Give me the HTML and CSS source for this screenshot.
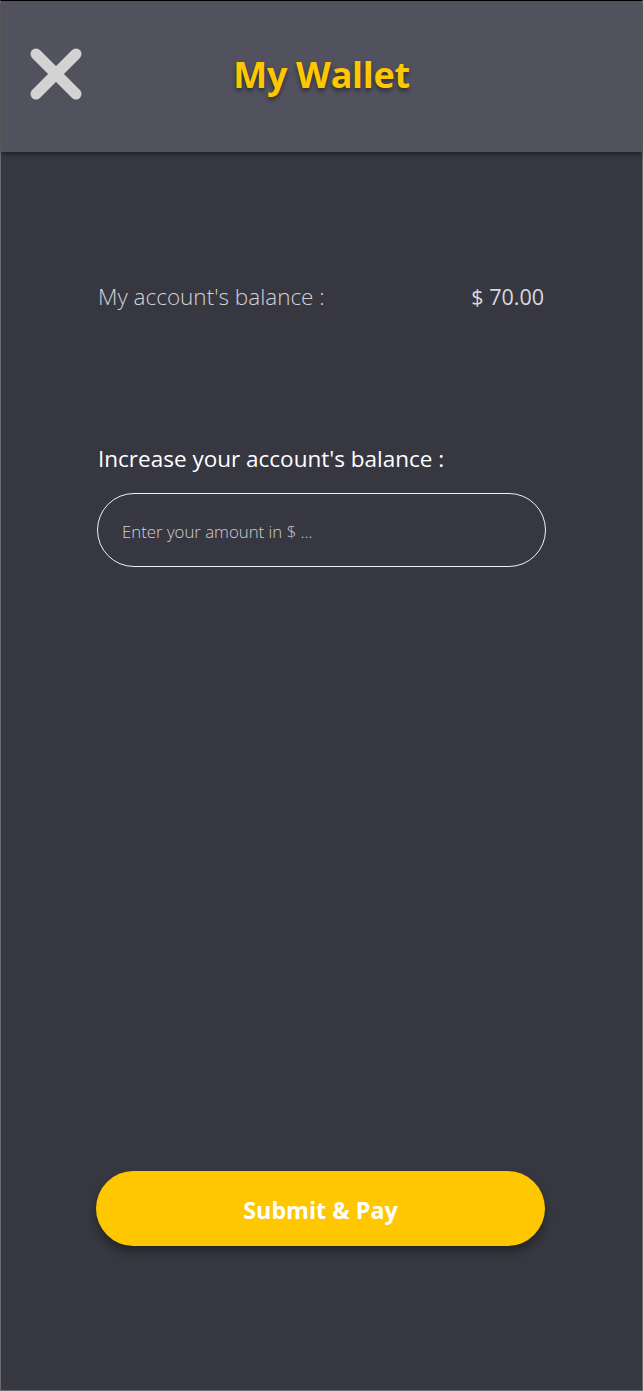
FILE: index.html
```html
<!DOCTYPE html>
<html>
<head>
<meta charset="utf-8">
<link rel="stylesheet" href="styles.css">
</head>
<body>
<div class="frame">
  <header class="topbar">
    <button class="close" aria-label="Close">
      <svg width="52" height="52" viewBox="0 0 52 52"><path d="M6 6 L46 46 M46 6 L6 46" stroke="#d3d3d3" stroke-width="11" stroke-linecap="round" fill="none"/></svg>
    </button>
    <h1 class="title">My Wallet</h1>
    <span></span>
  </header>
  <main class="content">
    <div class="balance-row">
      <span class="balance-label">My account's balance :</span>
      <span class="balance-value">$ 70.00</span>
    </div>
    <label class="inc-label" for="amt">Increase your account's balance :</label>
    <input id="amt" class="amount" type="text" placeholder="Enter your amount in $ ...">
    <button class="submit">Submit &amp; Pay</button>
  </main>
</div>
</body>
</html>
```

FILE: styles.css
```css
* { box-sizing: border-box; }
html, body { margin: 0; padding: 0; }
body {
  background: #373741;
  font-family: "Open Sans", "Noto Sans", sans-serif;
}
.frame {
  height: 1391px;
  display: flex;
  flex-direction: column;
  border-top: 1px solid #000;
  border-left: 1px solid #6b6b6b;
  border-right: 1px solid #6b6b6b;
  border-bottom: 1px solid #6b6b6b;
  background: #373741;
}
.topbar {
  height: 151px;
  flex: none;
  background: #52525e;
  box-shadow: 0 2px 5px rgba(0,0,0,0.45);
  display: grid;
  grid-template-columns: 1fr auto 1fr;
  align-items: center;
  position: relative;
  z-index: 1;
}
.close {
  justify-self: start;
  margin: -6px 0 0 29px;
  padding: 0;
  border: 0;
  background: none;
  width: 52px;
  height: 52px;
  display: block;
}
.close svg { display: block; }
.title {
  margin: 0 0 4px 0;
  font-size: 36px;
  font-weight: 700;
  color: #ffc700;
  text-shadow: 0 3px 4px rgba(0,0,0,0.45);
  letter-spacing: -0.3px;
}
.content {
  flex: 1;
  display: flex;
  flex-direction: column;
  padding: 129px 97px 144px 94px;
}
.balance-row {
  display: flex;
  justify-content: space-between;
  align-items: center;
  height: 30px;
  padding: 0 1px 0 3px;
  font-size: 22.5px;
  font-weight: 300;
  color: #d2d2d6;
}
.balance-value { font-weight: 400; color: #d9d9dc; font-size: 21.5px; }
.inc-label {
  margin-top: 133px;
  padding-left: 3px;
  height: 30px;
  line-height: 30px;
  font-size: 22.5px;
  font-weight: 400;
  color: #ffffff;
}
.amount {
  margin-top: 19px;
  margin-left: 2px;
  height: 74px;
  width: 449px;
  border: 1.5px solid #f2f2f2;
  border-radius: 37px;
  background: transparent;
  padding: 3px 0 0 24px;
  font-family: inherit;
  font-size: 16.8px;
  font-weight: 300;
  color: #fff;
  outline: none;
}
.amount::placeholder { color: #cfcfd3; }
.submit {
  margin-top: auto;
  margin-left: 1px;
  width: 449px;
  height: 75px;
  border: 0;
  border-radius: 38px;
  background: #ffc700;
  color: #fff;
  font-family: inherit;
  font-size: 23.3px;
  font-weight: 700;
  box-shadow: 0 6px 10px rgba(0,0,0,0.35);
  padding: 2px 0 0 0;
}
```
